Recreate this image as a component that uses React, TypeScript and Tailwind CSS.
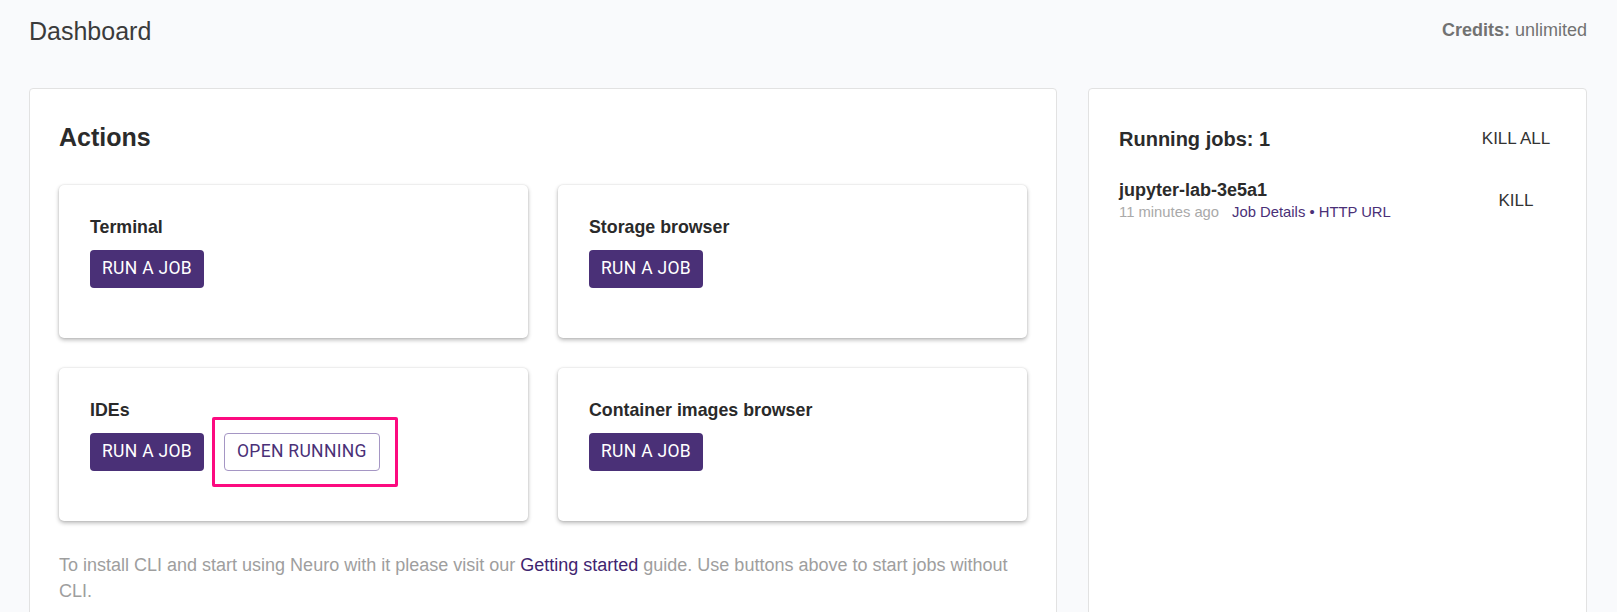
import React from "react";

const sans = "font-['Liberation_Sans',Arial,sans-serif]";
const roboto = "font-['Roboto','Liberation_Sans',sans-serif]";

function RunButton() {
  return (
    <button
      className={`${roboto} h-[38px] px-[12px] rounded-[4px] bg-[#4a3077] text-white text-[17.5px] leading-none uppercase tracking-[0.3px]`}
    >
      RUN A JOB
    </button>
  );
}

function ActionCard({ title, extra }: { title: string; extra?: React.ReactNode }) {
  return (
    <div className="bg-white rounded-[5px] shadow-[0_2px_4px_rgba(0,0,0,0.28),0_0_2px_rgba(0,0,0,0.12)] pl-[31px] pt-[32px] pb-[50px]">
      <div className={`${sans} text-[17.8px] leading-[20px] font-bold text-[#2a2a2a]`}>{title}</div>
      <div className="mt-[13px] flex items-center gap-[20px]">
        <RunButton />
        {extra}
      </div>
    </div>
  );
}

export default function App() {
  return (
    <div className={`${sans} h-screen overflow-hidden bg-[#f9fafc] pl-[29px] pr-[30px] pt-[16px] flex flex-col`}>
      <header className="flex items-start justify-between h-[30px]">
        <h1 className="text-[25px] leading-[30px] font-normal text-[#3b3b3b]">Dashboard</h1>
        <div className="mt-[1.5px] text-[18px] leading-[24px] text-[#727272]">
          <span className="font-bold">Credits:</span> unlimited
        </div>
      </header>

      <div className="mt-[42px] flex gap-[31px] flex-1 items-stretch">
        <section className="w-[1028px] shrink-0 bg-white border border-[#e2e2e2] rounded-[4px] px-[29px] pt-[33px] pb-[30px]">
          <h2 className="text-[25px] leading-[30px] font-bold text-[#2b2b2b]">Actions</h2>
          <div className="mt-[33px] grid grid-cols-2 gap-x-[30px] gap-y-[30px]">
            <ActionCard title="Terminal" />
            <ActionCard title="Storage browser" />
            <ActionCard
              title="IDEs"
              extra={
                <div className="relative">
                  <button
                    className={`${roboto} h-[38px] px-[12px] rounded-[4px] border border-[#a596c4] bg-white text-[#4a3077] text-[17.5px] leading-none uppercase tracking-[0.3px]`}
                  >
                    OPEN RUNNING
                  </button>
                  <div className="pointer-events-none absolute -left-[12px] -right-[18px] -top-[16px] -bottom-[16px] border-[3px] border-[#fc0a80] rounded-[2px]" />
                </div>
              }
            />
            <ActionCard title="Container images browser" />
          </div>
          <p className="mt-[32px] text-[18px] leading-[25.5px] text-[#9e9e9e]">
            To install CLI and start using Neuro with it please visit our{" "}
            <a className="text-[#3f2470]">Getting started</a> guide. Use buttons above to start jobs without CLI.
          </p>
        </section>

        <aside className="flex-1 bg-white border border-[#e2e2e2] rounded-[4px] pl-[30px] pr-[28px] pt-[38px]">
          <div className="flex items-center justify-between">
            <h2 className="text-[20px] leading-[24px] font-bold text-[#2b2b2b]">Running jobs: 1</h2>
            <button className="w-[84px] text-center text-[17px] leading-[20px] text-[#333]">KILL ALL</button>
          </div>
          <div className="mt-[26.5px] flex items-start justify-between">
            <div>
              <div className="text-[18px] leading-[24px] font-bold text-[#2b2b2b]">jupyter-lab-3e5a1</div>
              <div className="mt-[1px] text-[14.8px] leading-[18px]">
                <span className="text-[#a9a9a9]">11 minutes ago</span>
                <span className="ml-[13px] text-[#4a3077]">Job Details • HTTP URL</span>
              </div>
            </div>
            <button className="mt-[13px] w-[84px] text-center text-[17px] leading-[20px] text-[#333]">KILL</button>
          </div>
        </aside>
      </div>
    </div>
  );
}
